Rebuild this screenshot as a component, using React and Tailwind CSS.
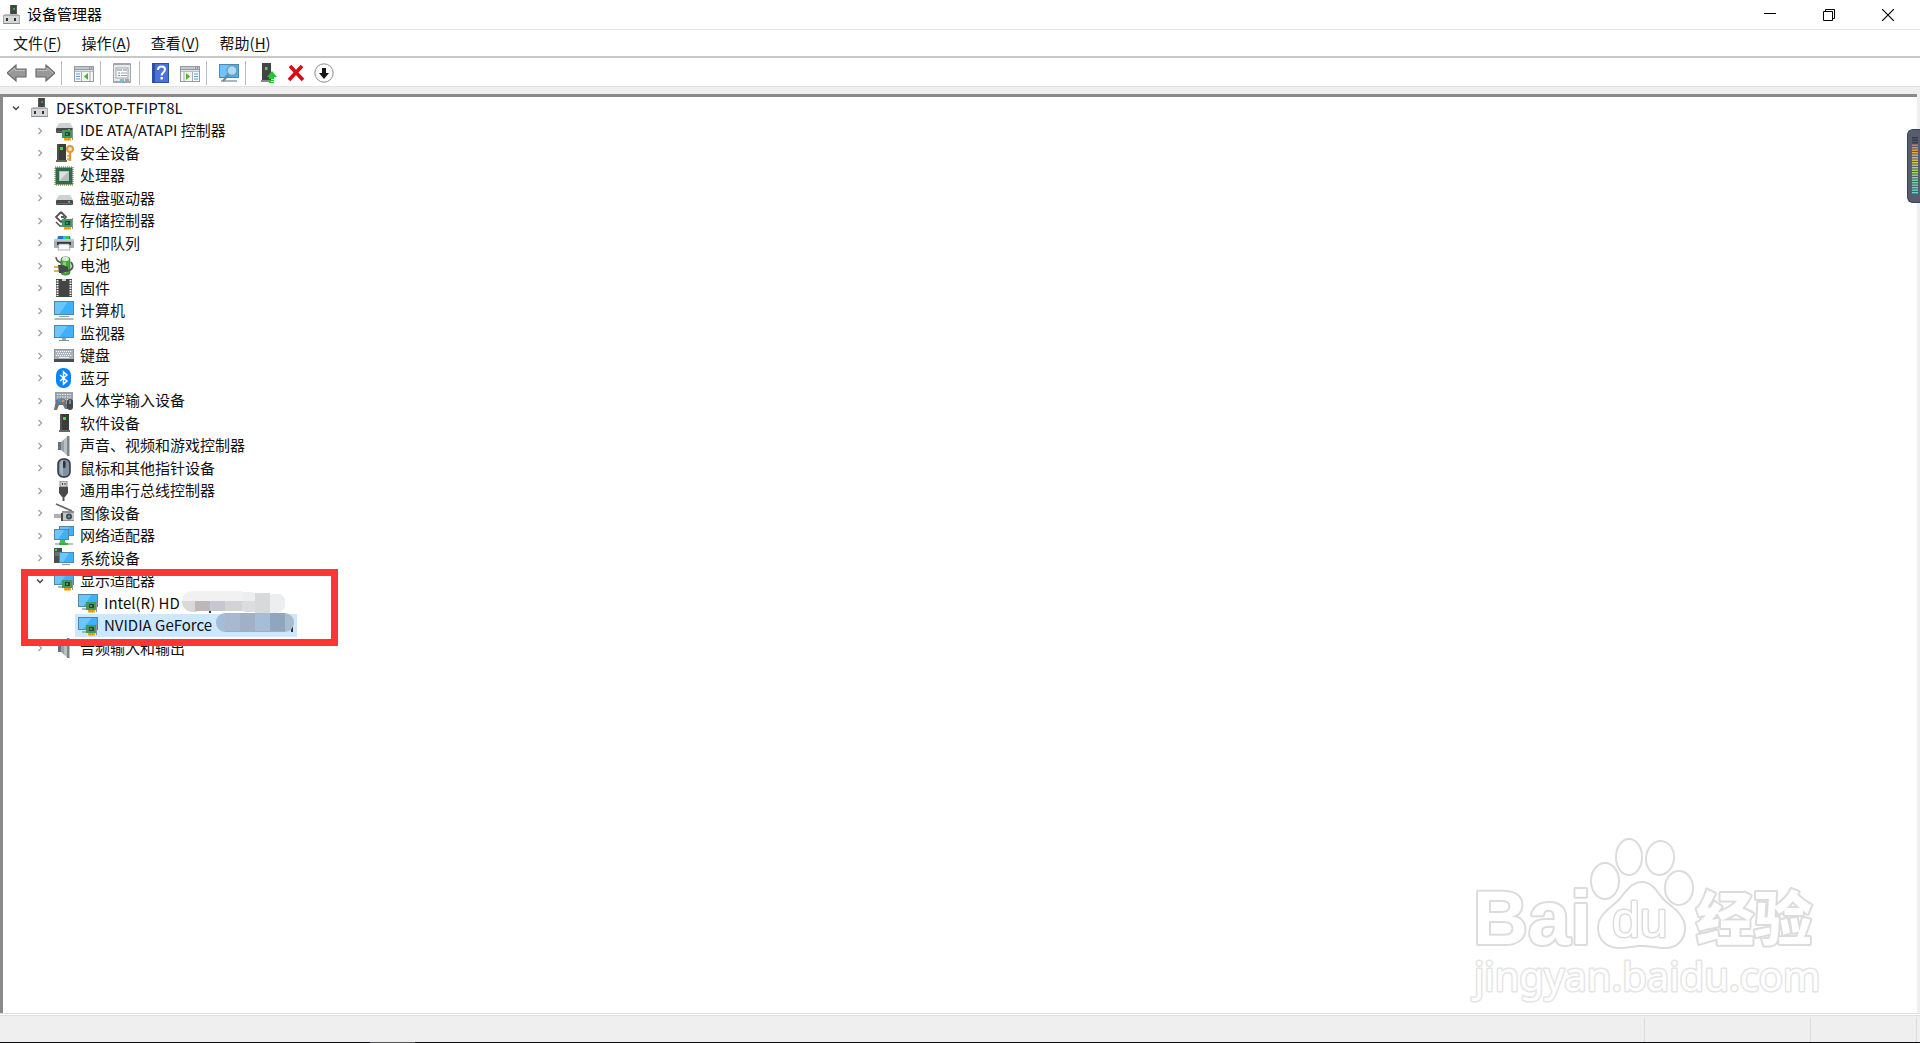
import { useState } from "react";

// ---- icon parts -----------------------------------------------------------

const Icon = ({ children, className = "" }) => (
  <svg viewBox="0 0 20 20" width="20" height="20" aria-hidden="true" className={`shrink-0 ${className}`}>
    {children}
  </svg>
);

const Screen = ({ x, y, w, h }) => (
  <g>
    <rect x={x} y={y} width={w} height={h} fill="#4f87a8" />
    <rect x={x + 1} y={y + 1} width={w - 2} height={h - 2} fill="#3fb1fb" />
    <path d={`M${x + 1} ${y + 1}h${w * 0.62}l${-w * 0.4} ${h - 2}h${-w * 0.22}z`} fill="#6cc5fd" />
  </g>
);

// green expansion card with gold contacts
const Card = ({ x, y }) => (
  <g transform={`translate(${x} ${y})`}>
    <rect x="0" y="1" width="10" height="8" fill="#3f9a5c" />
    <path d="M10 0h1v11h-1z" fill="#8a949b" />
    <rect x="3" y="3" width="5" height="4" fill="#1f4a33" />
    <rect x="4" y="4" width="2" height="2" fill="#5b8a70" />
    <path d="M2 9h7v2.500h-7z" fill="#f4a51c" />
    <path d="M4 9v2.500M6.500 9v2.500" stroke="#c77a08" strokeWidth=".6" />
  </g>
);

const ComputerIcon = () => (
  <Icon>
    <rect x="8" y="0" width="7" height="10" fill="#5a5a5a" />
    <rect x="9" y="0" width="5" height="10" fill="#444" />
    <rect x="11" y="3" width="2" height="2" fill="#2fa83c" />
    <path d="M3 9h13l2 2H1z" fill="#bdbebf" />
    <rect x="1" y="10" width="17" height="9" fill="#a9abad" />
    <rect x="2" y="11" width="15" height="7" fill="#d6d7d8" />
    <rect x="4" y="13" width="2" height="3" fill="#333" />
    <rect x="12" y="13" width="2" height="3" fill="#333" />
    <path d="M1 18h17v1H1z" fill="#8b8d8f" />
  </Icon>
);

const Drive = ({ y = 0 }) => (
  <g transform={`translate(0 ${y})`}>
    <path d="M5 0h11l3 5H2z" fill="#cfd1d2" />
    <rect x="2" y="5" width="17" height="5" rx="1" fill="#474a4b" />
    <rect x="3" y="8" width="15" height="1" fill="#6a6d6e" />
    <rect x="14" y="6" width="2" height="1.500" fill="#35e048" />
  </g>
);

const Tower = ({ x = 0 }) => (
  <g transform={`translate(${x} 0)`}>
    <path d="M6 1h9v16H6z" fill="#3b3b3b" />
    <path d="M6 1h2v16H6z" fill="#505050" />
    <path d="M5 17h11v2H5z" fill="#666" />
    <rect x="9" y="4" width="3" height="3" fill="#35e62e" />
  </g>
);

const Speaker = () => (
  <Icon>
    <path d="M4 6h4v8H4z" fill="#66737c" />
    <path d="M7 6l6-5v18l-6-5z" fill="#98a1a7" />
    <path d="M10 3.500L13 1v18l-3-2.500z" fill="#b9c0c4" />
    <path d="M13 0h2.500v20H13z" fill="#7b858b" />
  </Icon>
);

const DisplayCard = () => (
  <Icon>
    <Screen x={0} y={1} w={20} h={13} />
    <path d="M4 16h6" stroke="#8aa0ac" strokeWidth="1.500" />
    <Card x={8} y={8} />
  </Icon>
);

const icons = {
  ide: (
    <Icon>
      <Drive y={2} />
      <Card x={8} y={8} />
    </Icon>
  ),
  security: (
    <Icon>
      <Tower x={-3} />
      <circle cx="16" cy="6" r="3" fill="#f6e3bd" stroke="#d99c3a" strokeWidth="2" />
      <path d="M16 9v9" stroke="#d99c3a" strokeWidth="2.400" />
      <path d="M15 13h-2M15 16h-2" stroke="#d99c3a" strokeWidth="1.500" />
    </Icon>
  ),
  cpu: (
    <Icon>
      <rect x="1" y="1" width="18" height="18" fill="none" stroke="#a8955a" strokeWidth="1.500" strokeDasharray="1 1" />
      <rect x="1.500" y="1.500" width="17" height="17" fill="#2e6a4c" />
      <rect x="5" y="5" width="10" height="10" fill="#b9bdbd" />
      <path d="M6 6h8l-8 8z" fill="#dfe1e1" />
    </Icon>
  ),
  disk: (
    <Icon>
      <Drive y={7} />
    </Icon>
  ),
  storage: (
    <Icon>
      <path d="M7 1l5 5-2 2M7 1L2 6l5 5 2-2M7 6h3" fill="none" stroke="#555" strokeWidth="1.800" />
      <path d="M2 11l4 4h2" fill="none" stroke="#555" strokeWidth="1.500" />
      <Card x={8} y={7} />
    </Icon>
  ),
  printer: (
    <Icon>
      <path d="M4 3h12l1 4H3z" fill="#2c7fb5" />
      <path d="M5 3h4v4H5z" fill="#3466dc" />
      <path d="M9 3h3v4H9z" fill="#28c4df" />
      <path d="M12 3h3v4h-3z" fill="#3fc44d" />
      <rect x="0" y="6" width="20" height="9" rx="1" fill="#a8acb0" />
      <rect x="0" y="6" width="20" height="2" fill="#c3c7ca" />
      <path d="M3 9h14v3H3z" fill="#343638" />
      <path d="M5 11h10l1 6H4z" fill="#f8f8f8" stroke="#909396" strokeWidth=".7" />
    </Icon>
  ),
  battery: (
    <Icon>
      <path d="M2 1c0 4 3 5 6 6" fill="none" stroke="#5a5d5e" strokeWidth="1.500" />
      <rect x="7" y="1" width="9" height="18" rx="3" fill="#3fae35" stroke="#41633f" strokeWidth=".7" />
      <rect x="8" y="1" width="7" height="4" rx="2" fill="#dfe7dc" />
      <rect x="9" y="6" width="3" height="11" fill="#7fd673" />
      <path d="M13 15c6-1 7-5 4-9" fill="none" stroke="#55585a" strokeWidth="1.800" />
      <path d="M0 11h5M0 15h5" stroke="#d49a25" strokeWidth="1.500" />
      <path d="M4 9h5l5 2v4l-5 2H5z" fill="#45494b" />
    </Icon>
  ),
  firmware: (
    <Icon>
      <rect x="2" y="1" width="16" height="18" fill="#4a4a4a" />
      <path d="M3.500 2v16M16.500 2v16" stroke="#f4f4f4" strokeWidth="2" strokeDasharray="1.500 1" />
      <rect x="5" y="1" width="10" height="18" fill="#444" />
      <path d="M8 1h4v2H8z" fill="#ccc" />
    </Icon>
  ),
  computer: (
    <Icon>
      <Screen x={0} y={0} w={20} h={14} />
      <path d="M5 15.500h10" stroke="#8aa0ac" strokeWidth="1.200" />
      <path d="M1 17h18l1 2H0z" fill="#aebbc4" />
    </Icon>
  ),
  monitor: (
    <Icon>
      <Screen x={0} y={2} w={20} h={13} />
      <path d="M8 15h4v2H8z" fill="#91aab7" />
      <path d="M5 17.500h10" stroke="#7f929d" />
    </Icon>
  ),
  keyboard: (
    <Icon>
      <rect x="0" y="3" width="20" height="13" fill="#8f999f" />
      <rect x="1" y="4" width="18" height="9" fill="#a9b1b6" />
      <path d="M2 5.500h16M3 7.500h14M2 9.500h16" stroke="#f3f5f6" strokeDasharray="1.200 .8" />
      <path d="M5 11.500h10" stroke="#eff1f2" />
      <rect x="0" y="13" width="20" height="3" fill="#454e54" />
    </Icon>
  ),
  bluetooth: (
    <Icon>
      <rect x="2" y="0" width="15" height="20" rx="7" fill="#0a84ff" />
      <path d="M6 7l7 6-3.500 3V4L13 7l-7 6" fill="none" stroke="#fff" strokeWidth="1.500" />
    </Icon>
  ),
  hid: (
    <Icon>
      <rect x="1" y="1" width="18" height="10" fill="#98a1a7" />
      <path d="M3 3.500h14M3 6h14M3 8.500h14" stroke="#eef0f1" strokeWidth="1.200" strokeDasharray="1.500 1" />
      <path d="M2 9c3-2 8-2 10 0l2 9h-3l-2-4H5l-2 5H0z" fill="#69747b" />
      <rect x="4" y="8" width="3" height="3" fill="#3698e8" />
      <circle cx="9" cy="10" r="1.500" fill="#e29536" />
      <rect x="13" y="8" width="6" height="11" rx="3" fill="#3f484e" />
      <path d="M16 9v4" stroke="#bfc7cc" />
    </Icon>
  ),
  software: (
    <Icon>
      <Tower />
    </Icon>
  ),
  sound: <Speaker />,
  mouse: (
    <Icon>
      <rect x="4" y="1" width="12" height="18" rx="5" fill="#7e92a3" stroke="#2f3438" strokeWidth="1.500" />
      <path d="M6 7c0-3 1-5 3-5v16c-2-1-3-4-3-6z" fill="#a3b4c2" />
      <rect x="9" y="3" width="2.500" height="7" rx="1" fill="#2c3338" />
    </Icon>
  ),
  usb: (
    <Icon>
      <rect x="6" y="0" width="7" height="6" fill="#cfd1d2" stroke="#77797a" strokeWidth=".8" />
      <path d="M8 2h1v2H8zM10.500 2h1v2h-1z" fill="#444" />
      <path d="M5 6h9v6l-3 4H8l-3-4z" fill="#4a4a4a" />
      <path d="M9.500 15v5" stroke="#555" strokeWidth="2" />
    </Icon>
  ),
  imaging: (
    <Icon>
      <path d="M2 1l16 7" stroke="#66696a" strokeWidth="1.800" />
      <rect x="8" y="8" width="12" height="10" fill="#c4c5c6" />
      <path d="M8 8h12v2H8zM8 17h12v1H8z" fill="#8e9091" />
      <rect x="0" y="11" width="7" height="4" fill="#aeb0b1" />
      <path d="M8 10v8" stroke="#454748" strokeWidth="2" />
      <circle cx="15" cy="13.500" r="3" fill="#44494c" />
      <circle cx="15" cy="13.500" r="1.300" fill="#4a9cba" />
    </Icon>
  ),
  network: (
    <Icon>
      <Screen x={5} y={0} w={15} h={10} />
      <Screen x={0} y={3} w={15} h={11} />
      <path d="M6 14h5v2l3 2H4l2-2z" fill="#49bd4c" />
      <path d="M1 18h4M14 18h5" stroke="#b7c7b8" strokeWidth="2" />
      <path d="M5 18h9" stroke="#3fae42" strokeWidth="2" />
    </Icon>
  ),
  system: (
    <Icon>
      <rect x="0" y="0" width="8" height="15" fill="#4a4f52" />
      <path d="M1 5h6M1 7h6" stroke="#8a9195" />
      <rect x="1" y="1" width="2" height="2" fill="#44d84a" />
      <Screen x={5} y={4} w={15} h={11} />
      <path d="M8 16.500h8" stroke="#8aa0ac" strokeWidth="1.200" />
    </Icon>
  ),
  display: <DisplayCard />,
};

// ---- toolbar --------------------------------------------------------------

const Arrow = ({ flip }) => (
  <Icon>
    <g transform={flip ? "translate(20 0) scale(-1 1)" : undefined}>
      <path d="M0 10L9 2v4h10v8H9v4z" fill="#999" stroke="#6b6b6b" strokeWidth="1.200" />
      <path d="M2 10l6-5v2.500h10" fill="none" stroke="#bcbcbc" />
    </g>
  </Icon>
);

const Pane = ({ left }) => (
  <Icon>
    <rect x="0" y="3" width="20" height="16" fill="#939aa1" />
    <rect x="1" y="4" width="14" height="2" fill="#c4c9cd" />
    <path d="M16 5h3" stroke="#eee" strokeDasharray="1 1" />
    <rect x="1" y="7" width="18" height="1.500" fill="#dde1e4" />
    <rect x="1" y="9" width="18" height="9" fill="#f4f6f7" />
    {left ? (
      <>
        <path d="M2 11h4M2 13.500h4M2 16h4" stroke="#6997c4" />
        <path d="M7.500 9v9M16 9v9" stroke="#a7adb2" />
        <path d="M14 10v7l-4-3.500z" fill="#4eb52b" />
      </>
    ) : (
      <>
        <path d="M14 11h4M14 13.500h4M14 16h4" stroke="#6997c4" />
        <path d="M12.500 9v9M4 9v9" stroke="#a7adb2" />
        <path d="M6 10v7l4-3.500z" fill="#4eb52b" />
      </>
    )}
  </Icon>
);

const toolbar = [
  [
    { name: "后退", icon: <Arrow /> },
    { name: "前进", icon: <Arrow flip /> },
  ],
  [{ name: "显示/隐藏控制台树", icon: <Pane left /> }],
  [
    {
      name: "属性",
      icon: (
        <Icon>
          <rect x="0" y="0" width="18" height="20" rx="1" fill="#a4a7aa" />
          <rect x="1" y="2" width="16" height="16" fill="#e9eaeb" />
          <rect x="3" y="5" width="12" height="10" fill="#fff" stroke="#9da3a8" />
          <path d="M4 7h5M10 7h4" stroke="#a5adb4" strokeWidth="1.500" />
          <path d="M5 10h2M5 12.500h2" stroke="#2aa7d8" />
          <path d="M8 10h6M8 12.500h6" stroke="#9aa0a5" />
          <path d="M7 17h4" stroke="#36bce8" strokeWidth="1.500" />
          <path d="M12 17h4" stroke="#8d9195" strokeWidth="1.500" />
        </Icon>
      ),
    },
  ],
  [
    {
      name: "帮助",
      icon: (
        <Icon>
          <rect x="0" y="0" width="17" height="20" fill="#2c4fa8" />
          <rect x="3" y="1" width="13" height="18" fill="#4a72d8" />
          <path d="M6 7c0-5 7-4.500 7-.5 0 2.500-3.300 3-3.300 6" fill="none" stroke="#fff" strokeWidth="2" />
          <rect x="8.500" y="14" width="2.400" height="2.400" fill="#fff" />
        </Icon>
      ),
    },
    { name: "显示/隐藏操作窗格", icon: <Pane /> },
  ],
  [
    {
      name: "扫描检测硬件改动",
      icon: (
        <Icon>
          <Screen x={0} y={1} w={20} h={14} />
          <path d="M2 18h16" stroke="#8aa0ac" strokeWidth="1.500" />
          <path d="M10 11l-6 7" stroke="#73848f" strokeWidth="2" />
          <circle cx="13" cy="7.500" r="5" fill="#a8dcfb" stroke="#6e9cb5" strokeWidth="1.300" />
        </Icon>
      ),
    },
  ],
  [
    {
      name: "更新驱动程序",
      icon: (
        <Icon>
          <path d="M4 0h9v17H4z" fill="#444" />
          <path d="M3 17h10v2H3z" fill="#888" />
          <rect x="7" y="4" width="2.500" height="3" fill="#35e62e" />
          <path d="M14 8l5 6h-3v2h-5v-2H9zM11 17h5v1h-5zM11 19h5v1h-5z" fill="#26c52e" />
        </Icon>
      ),
    },
    {
      name: "卸载设备",
      icon: (
        <Icon>
          <path d="M4 3l13 14M16 3L3 17" stroke="#da0a18" strokeWidth="3.600" />
        </Icon>
      ),
    },
    {
      name: "禁用设备",
      icon: (
        <Icon>
          <circle cx="10" cy="10" r="9.200" fill="#fafafa" stroke="#8f8f8f" />
          <path d="M8 5h4v5h3l-5 6-5-6h3z" fill="#151515" />
        </Icon>
      ),
    },
  ],
];

const menus = [
  ["文件", "F"],
  ["操作", "A"],
  ["查看", "V"],
  ["帮助", "H"],
];

// ---- device tree ----------------------------------------------------------

const devices = [
  { label: "IDE ATA/ATAPI 控制器", icon: "ide" },
  { label: "安全设备", icon: "security" },
  { label: "处理器", icon: "cpu" },
  { label: "磁盘驱动器", icon: "disk" },
  { label: "存储控制器", icon: "storage" },
  { label: "打印队列", icon: "printer" },
  { label: "电池", icon: "battery" },
  { label: "固件", icon: "firmware" },
  { label: "计算机", icon: "computer" },
  { label: "监视器", icon: "monitor" },
  { label: "键盘", icon: "keyboard" },
  { label: "蓝牙", icon: "bluetooth" },
  { label: "人体学输入设备", icon: "hid" },
  { label: "软件设备", icon: "software" },
  { label: "声音、视频和游戏控制器", icon: "sound" },
  { label: "鼠标和其他指针设备", icon: "mouse" },
  { label: "通用串行总线控制器", icon: "usb" },
  { label: "图像设备", icon: "imaging" },
  { label: "网络适配器", icon: "network" },
  { label: "系统设备", icon: "system" },
  { label: "显示适配器", icon: "display", open: true },
  { label: "Intel(R) HD", icon: "display", child: true },
  { label: "NVIDIA GeForce", icon: "display", child: true },
  { label: "音频输入和输出", icon: "sound" },
];

const Chevron = ({ open }) => (
  <svg viewBox="0 0 10 10" width="10" height="10" aria-hidden="true">
    {open ? (
      <path d="M2 3.500l3 3 3-3" fill="none" stroke="#404040" strokeWidth="1.400" />
    ) : (
      <path d="M3.500 2l3 3-3 3" fill="none" stroke="#a0a0a0" strokeWidth="1.300" />
    )}
  </svg>
);

function TreeRow({ item, selected, onSelect }) {
  return (
    <li
      role="treeitem"
      aria-selected={selected}
      className={`flex items-center odd:h-[22px] even:h-[23px] ${item.child ? "pl-[72px]" : "pl-8"}`}
    >
      {!item.child && (
        <button type="button" aria-label={item.label} className="mr-[9px] shrink-0">
          <Chevron open={item.open} />
        </button>
      )}
      <button
        type="button"
        onClick={onSelect}
        className={`flex h-full items-center gap-[6px] whitespace-nowrap ${item.child ? "w-[222px] pl-[3px]" : ""} ${
          selected ? "bg-[#cce8ff]" : ""
        }`}
      >
        {icons[item.icon]}
        <span className="pb-px">{item.label}</span>
      </button>
    </li>
  );
}

// pixelated patches over the rest of the two adapter names
const mosaic = [
  [0, 11, 15, 11, "#d9d9da"],
  [0, 1, 60, 10, "#f1f1f1"],
  [13, 11, 15, 10, "#bcb8b9"],
  [28, 11, 15, 10, "#c5c8cf"],
  [43, 11, 18, 10, "#d3d3d6"],
  [60, 2, 13, 9, "#eeeeee"],
  [60, 11, 13, 11, "#dcdddf"],
  [73, 3, 15, 22, "#d8d9da"],
  [88, 4, 15, 19, "#eceeef"],
  [34, 23, 9, 20, "#a3bdd8"],
  [43, 23, 15, 20, "#a6b9d0"],
  [58, 23, 15, 20, "#a0b0c6"],
  [73, 23, 15, 20, "#a5bdd6"],
  [88, 23, 15, 20, "#8fa6be"],
  [103, 23, 9, 20, "#a9bccd"],
];

const Mosaic = () => (
  <svg viewBox="0 0 112 44" width="112" height="44" aria-hidden="true" className="absolute top-[493px] left-[179px]">
    <clipPath id="brush">
      <rect x="0" y="1" width="64" height="21" rx="10" />
      <path d="M20 0h38l16 3h20a10 10 0 0 1 0 20H70l-10-2H20z" />
      <rect x="34" y="23" width="78" height="19" rx="9" />
    </clipPath>
    <path d="M27 21h2v2h-2z" fill="#333" />
    <path d="M109 37h2v5h-2z" fill="#333" />
    <g clipPath="url(#brush)">
      {mosaic.map(([x, y, w, h, c]) => (
        <rect key={`${x}-${y}`} x={x} y={y} width={w} height={h} fill={c} />
      ))}
      <path d="M43 41.500h60" stroke="#e0949c" />
    </g>
  </svg>
);

const Watermark = () => (
  <svg
    viewBox="0 0 350 170"
    width="350"
    height="170"
    className="pointer-events-none absolute right-[97px] bottom-2 [paint-order:stroke]"
    fill="#fff"
    stroke="#dcdcdc"
    strokeWidth="4"
    strokeLinejoin="round"
  >
    <text x="3" y="109" className="font-['Liberation_Sans'] text-[76px] font-bold">
      Bai
    </text>
    <ellipse cx="135" cy="46" rx="13" ry="17" />
    <ellipse cx="159" cy="22" rx="12" ry="17" />
    <ellipse cx="190" cy="23" rx="13" ry="16" transform="rotate(8 190 23)" />
    <ellipse cx="209" cy="53" rx="13" ry="16" />
    <path d="M172 48c12 0 15 13 24 20s18 14 18 25c0 12-8 19-19 19-9 0-14-2-23-2s-14 2-23 2c-12 0-20-8-20-19 0-12 10-18 18-25s13-20 25-20z" />
    <text x="142" y="102" strokeWidth="3" className="font-['Liberation_Sans'] text-[50px]">
      du
    </text>
    <text x="226" y="105" className="font-['Noto_Sans_CJK_SC'] text-[58px] font-black">
      经验
    </text>
    <text x="4" y="156" stroke="#e4e4e4" strokeWidth="3" className="font-['Noto_Sans'] text-[40px]">
      jingyan.baidu.com
    </text>
  </svg>
);

const meterColors = [
  "#343844", "#343844", "#343844", "#e8745c", "#ea8a58", "#e69b52", "#e0ab4e", "#ddb84a",
  "#dcc248", "#dcca48", "#d6d04c", "#cad450", "#bcd65a", "#aed866", "#a0d872", "#94d87e",
  "#88d88a", "#7cd896", "#72d8a2", "#6ad8ae", "#64d8ba", "#60d8c4", "#5cd8cc",
];

const LevelMeter = () => (
  <div className="absolute top-[129px] right-0 flex h-[74px] w-[13px] items-center rounded-l-md border border-r-0 border-[#3c4250] bg-[#565d6e] pl-1">
    <svg viewBox="0 0 6 58" width="6" height="58" aria-hidden="true">
      {meterColors.map((c, i) => (
        <rect key={i} x="0" y={i * 2.5} width="6" height="1.400" fill={c} />
      ))}
    </svg>
  </div>
);

export default function App() {
  const [selected, setSelected] = useState("NVIDIA GeForce");

  return (
    <div className="relative flex min-h-screen flex-col overflow-hidden bg-white font-['Noto_Sans_CJK_SC',sans-serif] text-[15px] leading-5 text-[#111]">
      {/* Title bar */}
      <header className="flex h-[29px] items-center justify-between pr-[3px] pl-[2px]">
        <div className="flex items-center gap-[5px]">
          <ComputerIcon />
          <h1 className="pb-px text-black">设备管理器</h1>
        </div>
        <div className="flex h-full">
          <button type="button" aria-label="最小化" className="flex w-[59px] items-center justify-center">
            <svg viewBox="0 0 12 12" width="12" height="12">
              <path d="M0 4.500h12" stroke="#000" />
            </svg>
          </button>
          <button type="button" aria-label="还原" className="flex w-[59px] items-center justify-center">
            <svg viewBox="0 0 12 12" width="12" height="12" fill="none" stroke="#000">
              <path d="M.5 2.500h9v9h-9zM2.500 2.500v-2h9v9h-2" />
            </svg>
          </button>
          <button type="button" aria-label="关闭" className="flex w-[59px] items-center justify-center">
            <svg viewBox="0 0 12 12" width="12" height="12">
              <path d="M0 0l12 12M12 0L0 12" stroke="#000" strokeWidth="1.200" />
            </svg>
          </button>
        </div>
      </header>

      {/* Menu bar */}
      <nav className="flex h-[29px] items-center gap-5 border-t border-b-2 border-t-[#e6e6e6] border-b-[#c9c9cb] pl-[13px]">
        {menus.map(([label, key]) => (
          <button key={key} type="button">
            {label}(<span className="underline underline-offset-2">{key}</span>)
          </button>
        ))}
      </nav>

      {/* Toolbar */}
      <div role="toolbar" className="flex h-[29px] items-center border-b border-[#e0e0e0] pt-[2px] pl-[7px]">
        {toolbar.map((group, i) => (
          <div key={group[0].name} className="flex items-center gap-2">
            {i > 0 && <span className="mr-1 ml-[6px] h-6 w-px bg-[#bdbdbd]" />}
            {group.map((tool) => (
              <button key={tool.name} type="button" aria-label={tool.name} title={tool.name}>
                {tool.icon}
              </button>
            ))}
          </div>
        ))}
      </div>

      {/* Device tree */}
      <div className="flex flex-1 flex-col bg-[#efefef] pt-[7px] pr-[3px]">
        <main className="relative flex-1 border-t-[3px] border-l-[3px] border-[#8a8a8a] bg-white">
          <ul role="tree" aria-label="设备管理器">
            <li role="treeitem" className="flex items-center pl-2 odd:h-[22px]">
              <button type="button" aria-label="DESKTOP-TFIPT8L" className="mr-[9px] shrink-0">
                <Chevron open />
              </button>
              <button type="button" className="flex items-center gap-[6px]">
                <ComputerIcon />
                <span className="pb-px">DESKTOP-TFIPT8L</span>
              </button>
            </li>
            {devices.map((item) => (
              <TreeRow
                key={item.label}
                item={item}
                selected={selected === item.label}
                onSelect={() => setSelected(item.label)}
              />
            ))}
          </ul>
          <Mosaic />
          <div className="pointer-events-none absolute top-[472px] left-[18px] h-[77px] w-[317px] border-[7px] border-[#fc3635]" />
          <Watermark />
        </main>
      </div>

      {/* Status bar */}
      <footer className="border-t border-[#e0e0e0] pt-px">
        <div className="flex h-[27px] border-t border-[#e0e0e0] bg-[#efefef] pt-[2px] pr-[3px]">
          <div className="flex-1" />
          <div className="w-[166px] border-l border-[#dcdcdc]" />
          <div className="w-[107px] border-x border-[#dcdcdc]" />
        </div>
        <div className="h-px bg-[#0c0c10] pl-[370px]">
          <div className="h-px w-[45px] bg-[#555]" />
        </div>
      </footer>

      <LevelMeter />
    </div>
  );
}
